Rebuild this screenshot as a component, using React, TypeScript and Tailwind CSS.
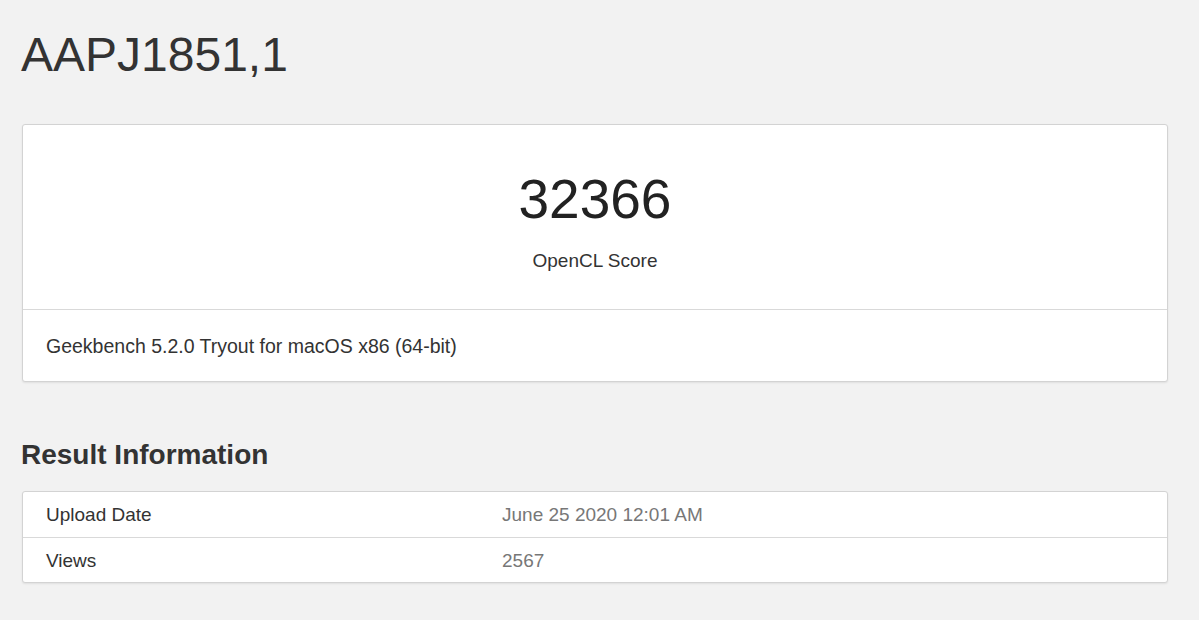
import React from "react";

export default function App() {
  const font = { fontFamily: '"Liberation Sans", Arial, sans-serif' };
  return (
    <div className="min-h-[620px] w-full bg-[#f2f2f2] text-[#333] pt-[26px]" style={font}>
      <div className="pl-[22px] pr-[31px] pb-[36px]">
        <h1 className="h-[58px] text-[48px] leading-[58px] font-normal text-[#333] -ml-[1px]">
          AAPJ1851,1
        </h1>

        <div className="mt-[40px] rounded-[3px] border border-[#d3d3d3] bg-white shadow-[0_1px_2px_rgba(0,0,0,0.08)]">
          <div className="flex h-[184px] flex-col items-center pt-[41px]">
            <div className="text-[55px] leading-[66px] text-[#222]">32366</div>
            <div className="mt-[17px] text-[19px] leading-[24px] text-[#333]">OpenCL Score</div>
          </div>
          <div className="flex h-[72px] items-center border-t border-[#d9d9d9] pl-[23px] pt-[2px] text-[19.5px] text-[#333]">
            Geekbench 5.2.0 Tryout for macOS x86 (64-bit)
          </div>
        </div>

        <h2 className="mt-[57px] h-[32px] text-[28px] leading-[32px] font-bold text-[#333] -ml-[1px]">
          Result Information
        </h2>

        <div className="mt-[20px] rounded-[3px] border border-[#d3d3d3] bg-white shadow-[0_1px_2px_rgba(0,0,0,0.08)]">
          <div className="grid h-[45px] grid-cols-[456px_1fr] items-center pl-[23px] pt-[2px] text-[19px]">
            <div className="text-[#333]">Upload Date</div>
            <div className="text-[#777]">June 25 2020 12:01 AM</div>
          </div>
          <div className="grid h-[45px] grid-cols-[456px_1fr] items-center border-t border-[#d9d9d9] pl-[23px] pt-[2px] text-[19px]">
            <div className="text-[#333]">Views</div>
            <div className="text-[#777]">2567</div>
          </div>
        </div>
      </div>
    </div>
  );
}
